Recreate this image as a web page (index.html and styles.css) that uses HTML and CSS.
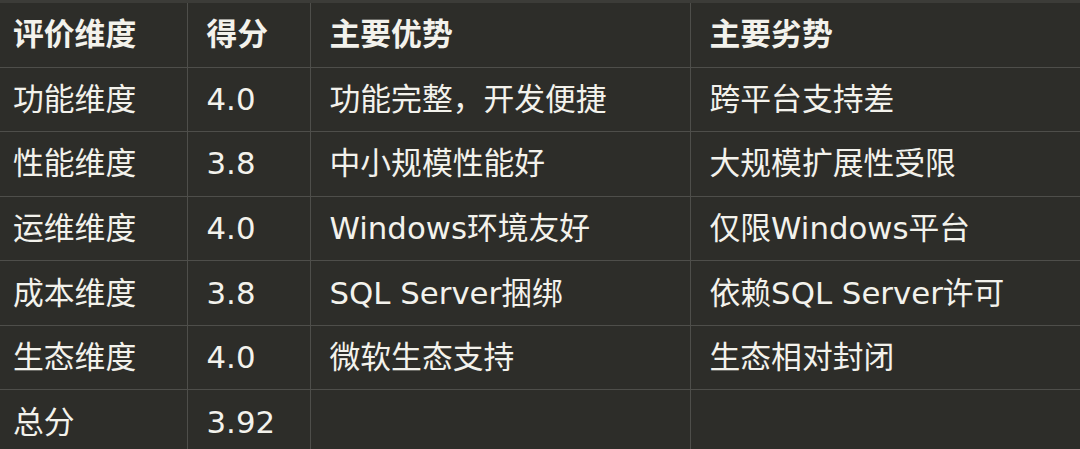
FILE: index.html
```html
<!DOCTYPE html>
<html lang="zh">
<head>
<meta charset="utf-8">
<link rel="stylesheet" href="styles.css">
</head>
<body>
<div class="topband"></div>
<table class="grid">
  <colgroup>
    <col class="c1"><col class="c2"><col class="c3"><col class="c4">
  </colgroup>
  <thead>
    <tr><th>评价维度</th><th>得分</th><th>主要优势</th><th>主要劣势</th></tr>
  </thead>
  <tbody>
    <tr><td>功能维度</td><td>4.0</td><td>功能完整，开发便捷</td><td>跨平台支持差</td></tr>
    <tr><td>性能维度</td><td>3.8</td><td>中小规模性能好</td><td>大规模扩展性受限</td></tr>
    <tr><td>运维维度</td><td>4.0</td><td>Windows环境友好</td><td>仅限Windows平台</td></tr>
    <tr><td>成本维度</td><td>3.8</td><td>SQL Server捆绑</td><td>依赖SQL Server许可</td></tr>
    <tr><td>生态维度</td><td>4.0</td><td>微软生态支持</td><td>生态相对封闭</td></tr>
    <tr><td>总分</td><td>3.92</td><td></td><td></td></tr>
  </tbody>
</table>
</body>
</html>
```
FILE: styles.css
```css
html, body {
  margin: 0;
  padding: 0;
  background: #2d2d29;
  overflow: hidden;
}
.topband {
  height: 3px;
  background: #3c3c38;
}
.grid {
  border-collapse: collapse;
  width: 1100px;
  table-layout: fixed;
  font-family: "DejaVu Sans", "Noto Sans CJK SC", sans-serif;
  font-size: 30.8px;
  color: #f3f2ec;
}
.c1 { width: 187px; }
.c2 { width: 123px; }
.c3 { width: 380px; }
.c4 { width: 410px; }
.grid th, .grid td {
  height: 64.6px;
  padding: 0 0 0 19px;
  text-align: left;
  vertical-align: middle;
  border-left: 1px solid #4e4e4a;
  border-bottom: 1px solid #4e4e4a;
  line-height: 31px;
  white-space: nowrap;
  box-sizing: border-box;
}
.grid th:first-child, .grid td:first-child {
  border-left: none;
  padding-left: 13px;
}
.grid th {
  font-weight: 700;
  height: 64px;
}
```
